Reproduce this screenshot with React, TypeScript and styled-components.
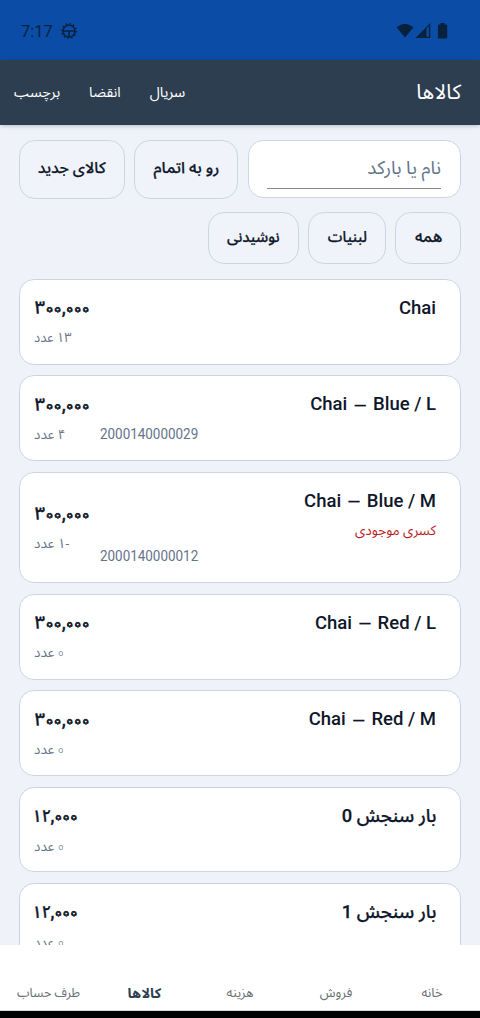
import React from "react";
import styled, { createGlobalStyle } from "styled-components";

const Global = createGlobalStyle`
  * { box-sizing: border-box; }
  body {
    margin: 0;
    background: #eff3f9;
    font-family: Roboto, "Noto Sans Arabic", "DejaVu Sans", sans-serif;
    color: #0f172a;
  }
`;

const Screen = styled.div`
  width: 480px;
  height: 1018px;
  display: flex;
  flex-direction: column;
  overflow: hidden;
  background: #eff3f9;
`;

const StatusBar = styled.div`
  flex: none;
  height: 60px;
  padding: 2px 32px 0 21px;
  display: flex;
  align-items: center;
  background: #0b4da6;
  color: #07213f;
`;

const Clock = styled.span`
  width: 38.5px;
  padding-top: 1px;
  font-size: 16.5px;
  line-height: 20px;
`;

const StatusIcons = styled.div`
  margin-left: auto;
  display: flex;
  align-items: center;
`;

const AppBar = styled.header`
  flex: none;
  position: relative;
  z-index: 1;
  height: 65.4px;
  padding: 0 19px 1px 14px;
  display: flex;
  align-items: center;
  justify-content: space-between;
  background: #2d3e50;
  color: #fff;
  box-shadow: 0 1px 4px rgba(15, 23, 42, 0.25);
`;

const Actions = styled.div`
  display: flex;
  gap: 29px;
`;

const Text = styled.span<{
  $size: number;
  $weight?: number;
  $color?: string;
  $sx?: number;
  $line?: number;
  $origin?: string;
  $stroke?: number;
}>`
  display: block;
  flex: none;
  white-space: nowrap;
  font-size: ${(p) => p.$size}px;
  line-height: ${(p) => p.$line ?? 24}px;
  font-weight: ${(p) => p.$weight ?? 400};
  color: ${(p) => p.$color ?? "inherit"};
  -webkit-text-stroke: ${(p) => p.$stroke ?? 0}px currentColor;
  transform: scaleX(${(p) => p.$sx ?? 1});
  transform-origin: ${(p) => p.$origin ?? "right"} center;
`;

const Dash = styled.span`
  margin: 0 1.6px;
  font-size: 17px;
  font-weight: 400;
  line-height: 0;
  vertical-align: -1.5px;
  -webkit-text-stroke: 0.2px currentColor;
`;

/* The Persian zero is a small dot in this face; shadows set on a circle open it into a ring. */
const ring = (radius: number, color: string) =>
  Array.from({ length: 12 }, (_, i) => {
    const a = (i * Math.PI) / 6;
    return `${(Math.cos(a) * radius).toFixed(2)}px ${(Math.sin(a) * radius).toFixed(2)}px 0 ${color}`;
  }).join(", ");

const Zero = styled.span<{ $small?: boolean }>`
  margin: 0 ${(p) => (p.$small ? 0.8 : 0)}px;
  font-size: ${(p) => (p.$small ? 8 : 14)}px;
  font-weight: 400;
  line-height: 0;
  vertical-align: ${(p) => (p.$small ? 1 : 0.4)}px;
  color: transparent;
  -webkit-text-stroke: 0;
  text-shadow: ${(p) => (p.$small ? ring(1.8, "#64748b") : ring(2.1, "#0f172a"))};
`;

const Digits = styled.span<{ $start: number; $end: number; $size?: number }>`
  margin-left: ${(p) => p.$start}px;
  margin-right: ${(p) => p.$end}px;
  font-size: ${(p) => p.$size ?? 18}px;
`;

const Body = styled.main`
  flex: 1;
  min-height: 0;
  overflow: hidden;
  padding: 14.6px 19px 0;
`;

const SearchRow = styled.div`
  display: flex;
  gap: 9.7px;
  height: 59px;
`;

const SearchBox = styled.div`
  flex: none;
  width: 212.6px;
  height: 58px;
  margin-left: 0.5px;
  padding: 8px 19px 9px 18px;
  border: 1px solid #ccd6e3;
  border-radius: 15px;
  background: #fff;
`;

const SearchField = styled.div`
  height: 40px;
  padding-top: 7px;
  border-bottom: 1.5px solid #85898a;
`;

const Chip = styled.button<{ $w: number }>`
  flex: none;
  width: ${(p) => p.$w}px;
  height: 100%;
  padding: 0 18px 3px;
  display: flex;
  align-items: center;
  border: 1px solid #ccd6e3;
  border-radius: 16px;
  background: #f0f4fa;
  color: #0f172a;
  font-family: inherit;
`;

const ChipRow = styled.div`
  display: flex;
  gap: 9.3px;
  height: 52.5px;
  margin-top: 13px;
`;

const List = styled.div`
  display: flex;
  flex-direction: column;
  gap: 10.6px;
  margin-top: 14.5px;
`;

const Card = styled.article<{ $tall?: boolean }>`
  flex: none;
  height: ${(p) => (p.$tall ? 111.4 : 85.8)}px;
  padding: 0 24px 0 14px;
  display: flex;
  border: 1px solid #ccd6e3;
  border-radius: 15px;
  background: #fff;
`;

const Info = styled.div`
  flex: 1;
  padding-top: 16px;
`;

const Barcode = styled.div<{ $tall?: boolean }>`
  width: 110px;
  margin-left: 9.5px;
  padding-top: ${(p) => (p.$tall ? 70.8 : 46)}px;
  text-align: left;
`;

const Amount = styled.div<{ $tall?: boolean }>`
  width: 56px;
  padding-top: ${(p) => (p.$tall ? 27.5 : 14.5)}px;
  display: flex;
  flex-direction: column;
  align-items: flex-end;
`;

const NavBar = styled.nav`
  flex: none;
  height: 66px;
  padding-top: 36px;
  display: grid;
  grid-template-columns: repeat(5, 1fr);
  justify-items: center;
  background: #fff;
  border-bottom: 1px solid #d5d9de;
`;

const SystemBar = styled.div`
  flex: none;
  height: 7px;
  background: #000;
`;

type Product = { name: string; price: string; stock: string; code?: string; warning?: string };

const products: Product[] = [
  { name: "Chai", price: "۳۰۰,۰۰۰", stock: "۱۳ عدد" },
  { name: "Chai — Blue / L", price: "۳۰۰,۰۰۰", stock: "۴ عدد", code: "2000140000029" },
  { name: "Chai — Blue / M", price: "۳۰۰,۰۰۰", stock: "-۱ عدد", code: "2000140000012", warning: "کسری موجودی" },
  { name: "Chai — Red / L", price: "۳۰۰,۰۰۰", stock: "۰ عدد" },
  { name: "Chai — Red / M", price: "۳۰۰,۰۰۰", stock: "۰ عدد" },
  { name: "بار سنجش 0", price: "۱۲,۰۰۰", stock: "۰ عدد" },
  { name: "بار سنجش 1", price: "۱۲,۰۰۰", stock: "۰ عدد" },
];

const tabs = ["خانه", "فروش", "هزینه", "کالاها", "طرف حساب"];

function Name({ value }: { value: string }) {
  const parts = value.split("—");
  const persian = value.startsWith("ب");
  return (
    <Text $size={18.5} $weight={500} $stroke={persian ? 0.25 : 0} $sx={persian ? 0.99 : 1}>
      {parts[0]}
      {parts.length > 1 && <Dash>—</Dash>}
      {parts[1]}
    </Text>
  );
}

function Price({ value }: { value: string }) {
  const narrow = value.startsWith("۱");
  return (
    <Text dir="ltr" $size={18} $weight={500} $line={27} $stroke={0.35} $origin="left" $sx={narrow ? 0.97 : 1}>
      {value.split(/(۰+|,)/).filter(Boolean).map((part, i) => {
        if (part.startsWith("۰")) return <Zero key={i}>{part}</Zero>;
        if (part === "۱۲") return <Digits key={i} $start={-1.8} $end={-0.6} $size={17}>{part}</Digits>;
        return <Digits key={i} $start={part === "," ? 0 : 0.7} $end={part === "," ? 0 : 0.7}>{part}</Digits>;
      })}
    </Text>
  );
}

function Stock({ value }: { value: string }) {
  const empty = value.startsWith("۰");
  return (
    <Text $size={13.5} $color="#64748b" $line={32} $origin="left" $sx={value.startsWith("۱۳") ? 0.96 : 1}>
      {empty && <Zero $small>۰</Zero>}
      {empty ? value.slice(1) : value}
    </Text>
  );
}

function DebugIcon() {
  return (
    <svg width="18" height="18" viewBox="0 0 18 18" fill="none" stroke="currentColor">
      <circle cx="9" cy="9" r="6" strokeWidth="1.6" />
      <circle cx="9" cy="9" r="7.4" strokeWidth="1.4" strokeDasharray="1.5 2.375" />
      <path d="M3 9h12M9 9v6" strokeWidth="1.5" />
    </svg>
  );
}

function SignalIcons() {
  return (
    <svg width="52" height="18" viewBox="0 0 52 18" fill="currentColor">
      <path d="M0.5 5.2Q9 -1.8 17.5 5.2L9 15.5z" />
      <path d="M19.5 16L34.3 1v15z M30.5 6.2v8.6h2.3V4z" fillRule="evenodd" />
      <path d="M44.5 1h4.2v1.5H50.2q1 0 1 1V15.5q0 1-1 1h-7.3q-1 0-1-1V3.5q0-1 1-1h1.6z" />
    </svg>
  );
}

export default function App() {
  return (
    <Screen>
      <Global />
      <StatusBar>
        <Clock>7:17</Clock>
        <DebugIcon />
        <StatusIcons>
          <SignalIcons />
        </StatusIcons>
      </StatusBar>
      <AppBar dir="rtl">
        <Text $size={20.8}>کالاها</Text>
        <Actions>
          <Text $size={14.6}>سریال</Text>
          <Text $size={14.1}>انقضا</Text>
          <Text $size={14.6}>برچسب</Text>
        </Actions>
      </AppBar>
      <Body dir="rtl">
        <SearchRow>
          <SearchBox>
            <SearchField>
              <Text $size={18.6} $color="#64748b">نام یا بارکد</Text>
            </SearchField>
          </SearchBox>
          <Chip $w={103.8}><Text $size={15.5} $weight={500} $stroke={0.25} $sx={1.04}>رو به اتمام</Text></Chip>
          <Chip $w={105.8}><Text $size={15.3} $weight={500} $stroke={0.25} $sx={1.02}>کالای جدید</Text></Chip>
        </SearchRow>
        <ChipRow>
          <Chip $w={66}><Text $size={15.5} $weight={500} $stroke={0.25} $sx={1.04}>همه</Text></Chip>
          <Chip $w={77.4}><Text $size={15} $weight={500} $stroke={0.25} $sx={0.98}>لبنیات</Text></Chip>
          <Chip $w={90.8}><Text $size={15} $weight={500} $stroke={0.25} $sx={0.98}>نوشیدنی</Text></Chip>
        </ChipRow>
        <List>
          {products.map((p) => (
            <Card key={p.name} $tall={!!p.warning}>
              <Info>
                <Name value={p.name} />
                {p.warning && <Text $size={13.6} $color="#b91c1c" $line={34}>{p.warning}</Text>}
              </Info>
              <Barcode $tall={!!p.warning}>
                <Text $size={14} $color="#64748b" $sx={0.96} $origin="left">{p.code}</Text>
              </Barcode>
              <Amount $tall={!!p.warning}>
                <Price value={p.price} />
                <Stock value={p.stock} />
              </Amount>
            </Card>
          ))}
        </List>
      </Body>
      <NavBar dir="rtl">
        {tabs.map((t) => {
          const active = t === "کالاها";
          return (
            <Text
              key={t}
              $size={active ? 13.8 : 13}
              $color={active ? "#2d3e50" : "#6b6f73"}
              $weight={active ? 700 : 400}
              $sx={active ? 1.03 : t === "طرف حساب" ? 0.97 : 1}
              $origin="center"
            >
              {t}
            </Text>
          );
        })}
      </NavBar>
      <SystemBar />
    </Screen>
  );
}
